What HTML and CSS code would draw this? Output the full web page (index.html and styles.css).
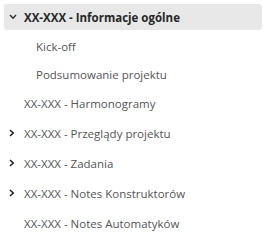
FILE: index.html
```html
<!DOCTYPE html>
<html>
<head>
<meta charset="utf-8">
<link rel="stylesheet" href="styles.css">
</head>
<body>
<ul class="tree">
  <li class="row top active">
    <span class="chev"><svg width="8" height="6" viewBox="0 0 8 6"><polyline points="1,1 4,4.2 7,1" fill="none" stroke="#333" stroke-width="1.5"/></svg></span>
    <span class="label bold">XX-XXX - Informacje ogólne</span>
  </li>
  <li class="row sub"><span class="label">Kick-off</span></li>
  <li class="row sub"><span class="label">Podsumowanie projektu</span></li>
  <li class="row top"><span class="chev"></span><span class="label">XX-XXX - Harmonogramy</span></li>
  <li class="row top">
    <span class="chev"><svg width="6" height="8" viewBox="0 0 6 8"><polyline points="1,1 4.2,4 1,7" fill="none" stroke="#222" stroke-width="1.6"/></svg></span>
    <span class="label">XX-XXX - Przeglądy projektu</span>
  </li>
  <li class="row top">
    <span class="chev"><svg width="6" height="8" viewBox="0 0 6 8"><polyline points="1,1 4.2,4 1,7" fill="none" stroke="#222" stroke-width="1.6"/></svg></span>
    <span class="label">XX-XXX - Zadania</span>
  </li>
  <li class="row top">
    <span class="chev"><svg width="6" height="8" viewBox="0 0 6 8"><polyline points="1,1 4.2,4 1,7" fill="none" stroke="#222" stroke-width="1.6"/></svg></span>
    <span class="label">XX-XXX - Notes Konstruktorów</span>
  </li>
  <li class="row top"><span class="chev"></span><span class="label">XX-XXX - Notes Automatyków</span></li>
</ul>
</body>
</html>
```

FILE: styles.css
```css
html, body {
  margin: 0;
  padding: 0;
  background: #ffffff;
}
body {
  font-family: "Open Sans", "Noto Sans", sans-serif;
  font-size: 11.5px;
  color: #555555;
}
.tree {
  list-style: none;
  margin: 0;
  padding: 4px 6px 0 4px;
}
.row {
  display: flex;
  align-items: center;
  white-space: nowrap;
}
.row.top {
  height: 30px;
  padding-left: 5px;
}
.row.active {
  height: 26px;
  margin-bottom: 2px;
  background: #e8e8e8;
  border-radius: 3px;
}
.row.sub {
  height: 28px;
  padding-left: 32px;
}
.chev {
  width: 15px;
  flex: none;
  display: flex;
  align-items: center;
}
.chev svg {
  display: block;
}
.bold {
  font-weight: 700;
  color: #262626;
}
```
